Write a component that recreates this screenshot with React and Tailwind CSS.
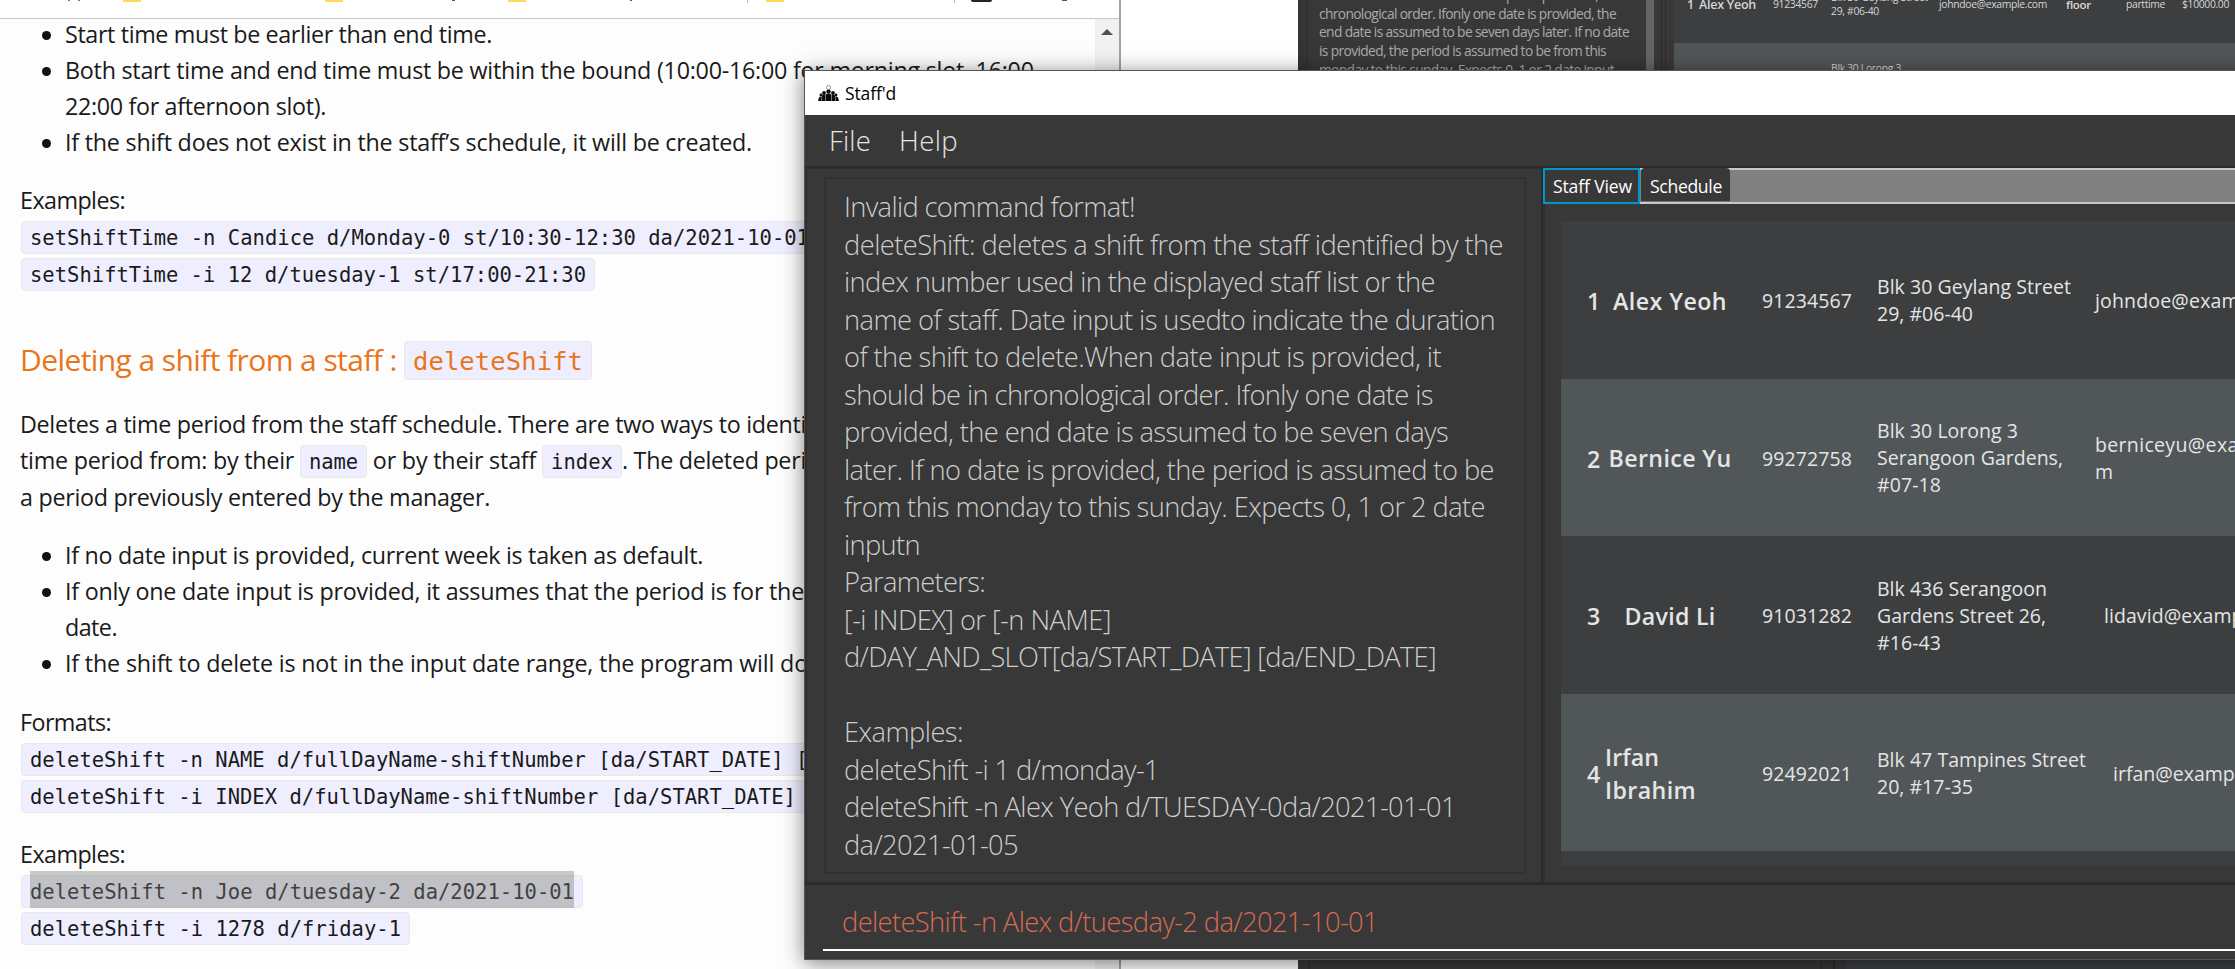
import { useLayoutEffect, useRef } from "react";

/* One line of text whose tracking is adjusted so that it spans `w` pixels. */
function Fit({ w, className = "", children }) {
  const ref = useRef(null);
  useLayoutEffect(() => {
    const el = ref.current;
    el.style.letterSpacing = "0px";
    const natural = el.getBoundingClientRect().width;
    el.style.letterSpacing = (w - natural) / el.textContent.length + "px";
  }, [w, children]);
  return (
    <span ref={ref} className={"inline-block whitespace-pre " + className}>
      {children}
    </span>
  );
}

function Bullet({ lines }) {
  return (
    <li className="flex">
      <span className="mt-[15px] ml-[42px] h-[9px] w-[9px] shrink-0 rounded-full bg-[#111]" />
      <div className="ml-[14px] flex flex-col items-start">
        {lines.map(([text, w]) => (
          <Fit key={text} w={w}>{text}</Fit>
        ))}
      </div>
    </li>
  );
}

const codeBox =
  "box-border inline-flex h-[33px] items-center rounded-[4px] border border-[#e8e8e8] bg-[#eeeeff] px-2 pt-[2px] font-['DejaVu_Sans_Mono',monospace] text-[20.5px] leading-[31px] whitespace-pre";

function Code({ w, selected, children }) {
  return (
    <div className={codeBox + " relative"}>
      <Fit w={w}>{children}</Fit>
      {selected && <span className="absolute -top-[5px] left-2 h-[37px] w-[544px] bg-[#7b7b72]/40" />}
    </div>
  );
}

function BrowserWindow() {
  return (
    <div className="absolute top-0 left-0 flex h-[969px] w-[1121px] flex-col overflow-hidden border-r-2 border-[#a3a3a3] bg-white">
      <div className="relative h-[19px] shrink-0 border-b border-[#c9c9c9] bg-white">
        <span className="absolute top-0 left-[68px] h-px w-[2px] bg-[#777]" />
        <span className="absolute top-0 left-[78px] h-px w-[2px] bg-[#777]" />
        <span className="absolute top-0 left-[123px] h-[2px] w-[18px] bg-[#ffd95b]" />
        <span className="absolute top-0 left-[325px] h-[2px] w-[18px] bg-[#ffd95b]" />
        <span className="absolute top-0 left-[452px] h-px w-[3px] bg-[#555]" />
        <span className="absolute top-0 left-[508px] h-[2px] w-[18px] bg-[#ffd95b]" />
        <span className="absolute top-0 left-[630px] h-px w-[2px] bg-[#555]" />
        <span className="absolute top-0 left-[747px] h-[3px] w-px bg-[#bbb]" />
        <span className="absolute top-0 left-[766px] h-[2px] w-[18px] bg-[#ffd95b]" />
        <span className="absolute top-0 left-[954px] h-[3px] w-px bg-[#bbb]" />
        <span className="absolute top-0 left-[971px] h-[2px] w-[21px] rounded-b bg-[#24222a]" />
        <span className="absolute top-0 left-[1062px] h-px w-[5px] bg-[#555]" />
      </div>
      <div className="flex min-h-0 flex-1">
        <div className="flex w-[1095px] flex-col overflow-hidden bg-[#fdfdfd] font-['Open_Sans',sans-serif] text-[23.3px] leading-[36px] text-[#1a1a1a]">
          <ul className="-mt-[3px] flex flex-col">
            <Bullet lines={[["Start time must be earlier than end time.", 427]]} />
            <Bullet
              lines={[
                ["Both start time and end time must be within the bound (10:00-16:00 for morning slot, 16:00-", 976],
                ["22:00 for afternoon slot).", 261],
              ]}
            />
            <Bullet lines={[["If the shift does not exist in the staff’s schedule, it will be created.", 687]]} />
          </ul>
          <div className="mt-[22px] flex flex-col items-start pl-[20px]">
            <Fit w={105}>Examples:</Fit>
            <div className="mt-[3px] flex flex-col items-start gap-1 pl-px">
              <Code w={779}>setShiftTime -n Candice d/Monday-0 st/10:30-12:30 da/2021-10-01</Code>
              <Code w={556}>setShiftTime -i 12 d/tuesday-1 st/17:00-21:30</Code>
            </div>
            <h3 className="mt-[50px] flex text-[30px] leading-[37px] text-[#e9751a]">
              <Fit w={384}>Deleting a shift from a staff : </Fit>
              <span className="inline-flex h-[39px] items-center rounded-[4px] border border-[#e8e8e8] bg-[#eeeeff] px-2 pt-[2px] font-['DejaVu_Sans_Mono',monospace] text-[25.5px] leading-[37px]">
                <Fit w={170}>deleteShift</Fit>
              </span>
            </h3>
            <div className="mt-[26px] flex flex-col items-start">
              <Fit w={786}>Deletes a time period from the staff schedule. There are two ways to identi</Fit>
              <div className="flex h-[37px]">
                <Fit w={280}>time period from: by their </Fit>
                <span className={codeBox + " mt-[3px]"}><Fit w={49}>name</Fit></span>
                <Fit w={175}> or by their staff </Fit>
                <span className={codeBox + " mt-[3px]"}><Fit w={62}>index</Fit></span>
                <Fit w={184}>. The deleted peri</Fit>
              </div>
              <Fit w={470}>a period previously entered by the manager.</Fit>
            </div>
          </div>
          <ul className="mt-[22px] flex flex-col">
            <Bullet lines={[["If no date input is provided, current week is taken as default.", 638]]} />
            <Bullet
              lines={[
                ["If only one date input is provided, it assumes that the period is for the", 739],
                ["date.", 52],
              ]}
            />
            <Bullet lines={[["If the shift to delete is not in the input date range, the program will do", 743]]} />
          </ul>
          <div className="mt-[23px] flex flex-col items-start pl-[20px]">
            <Fit w={91}>Formats:</Fit>
            <div className="mt-[3px] flex flex-col items-start gap-1 pl-px">
              <Code w={803}>deleteShift -n NAME d/fullDayName-shiftNumber [da/START_DATE] [da</Code>
              <Code w={803}>deleteShift -i INDEX d/fullDayName-shiftNumber [da/START_DATE] [d</Code>
            </div>
            <Fit w={105} className="mt-[23px]">Examples:</Fit>
            <div className="mt-[3px] flex flex-col items-start gap-1 pl-px">
              <Code w={544} selected>deleteShift -n Joe d/tuesday-2 da/2021-10-01</Code>
              <Code w={371}>deleteShift -i 1278 d/friday-1</Code>
            </div>
          </div>
        </div>
        <div className="flex flex-1 justify-center bg-[#f1f1f1] pt-[10px]">
          <svg width="12" height="6" viewBox="0 0 12 6" fill="#505050"><path d="M6 0L12 6H0z" /></svg>
        </div>
      </div>
    </div>
  );
}

function BackdropApp() {
  return (
    <div className="absolute top-0 left-[1298px] flex h-[969px] w-[937px] flex-col overflow-hidden bg-[#383838] font-['Open_Sans',sans-serif]">
      <div className="flex h-[900px] shrink-0">
        <div className="w-[10px] border-r border-[#2f2f2f] bg-[#343434]" />
        <div className="-mt-[14px] flex w-[338px] flex-col items-start pl-[11px] text-[13.8px] leading-[18.7px] text-[#a9abab]">
          <Fit w={290}>the shift to delete.When date input is provided, it</Fit>
          <Fit w={297}>chronological order. Ifonly one date is provided, the</Fit>
          <Fit w={310}>end date is assumed to be seven days later. If no date</Fit>
          <Fit w={287}>is provided, the period is assumed to be from this</Fit>
          <Fit w={295}>monday to this sunday. Expects 0, 1 or 2 date input</Fit>
        </div>
        <div className="w-2 bg-[#656565]" />
        <div className="ml-[7px] w-[5px] border-x border-[#2b2b2b]" />
        <div className="ml-2 flex flex-1 flex-col text-[10.4px] leading-[13.5px] text-[#d5d6d6]">
          <div className="flex h-[43px] bg-[#3c3e3f]">
            <div className="flex w-full items-start pl-[13px] font-normal">
              <Fit w={7} className="-mt-[2px] text-[12.5px] font-semibold">1</Fit>
              <Fit w={57} className="-mt-[2px] ml-[5px] text-[12.5px] font-semibold">Alex Yeoh</Fit>
              <Fit w={45} className="-mt-[2px] ml-[17px]">91234567</Fit>
              <div className="-mt-[9px] ml-[13px] flex w-[108px] flex-col items-start">
                <Fit w={97}>Blk 30 Geylang Street</Fit>
                <Fit w={48}>29, #06-40</Fit>
              </div>
              <Fit w={108} className="-mt-[2px]">johndoe@example.com</Fit>
              <Fit w={25} className="-mt-[2px] ml-[19px] text-[11.5px] font-semibold">floor</Fit>
              <Fit w={39} className="-mt-[2px] ml-[35px]">parttime</Fit>
              <Fit w={47} className="-mt-[2px] ml-[17px]">$10000.00</Fit>
            </div>
          </div>
          <div className="flex-1 bg-[#515658] pt-[19px] pl-[157px]">
            <Fit w={70}>Blk 30 Lorong 3</Fit>
          </div>
        </div>
      </div>
      <div className="flex flex-1">
        <div className="w-[12px] border-r border-[#2b2b2b]" />
        <div className="w-[512px] border-r border-[#2b2b2b]" />
        <div className="w-[13px] border-r-2 border-[#2b2b2b]" />
        <div className="ml-[12px] flex-1 bg-[#3c3e42]" />
      </div>
    </div>
  );
}

function TeamIcon() {
  return (
    <svg width="21" height="17" viewBox="0 0 21 17" fill="#0a0a0a">
      <circle cx="10.5" cy="2.6" r="2.1" fill="#fff" stroke="#888" strokeWidth="0.9" />
      <circle cx="10.5" cy="6.6" r="2.2" />
      <circle cx="6" cy="8" r="1.9" />
      <circle cx="15" cy="8" r="1.9" />
      <circle cx="3" cy="10" r="1.4" />
      <circle cx="18" cy="10" r="1.4" />
      <path d="M7.5 16V11Q7.5 8.6 10.5 8.6T13.5 11V16z" />
      <path d="M3.7 16V12Q3.7 9.8 5.6 9.8H7.1V16zM17.3 16V12Q17.3 9.8 15.4 9.8H13.9V16z" />
      <path d="M0 16L1 12.4Q1.6 11.4 3.4 11.4V16zM21 16L20 12.4Q19.4 11.4 17.6 11.4V16z" />
    </svg>
  );
}

const message = [
  ["Invalid command format!", 291],
  ["deleteShift: deletes a shift from the staff identified by the", 659],
  ["index number used in the displayed staff list or the", 591],
  ["name of staff. Date input is usedto indicate the duration", 651],
  ["of the shift to delete.When date input is provided, it", 597],
  ["should be in chronological order. Ifonly one date is", 589],
  ["provided, the end date is assumed to be seven days", 604],
  ["later. If no date is provided, the period is assumed to be", 650],
  ["from this monday to this sunday. Expects 0, 1 or 2 date", 641],
  ["inputn", 76],
  ["Parameters:", 141],
  ["[-i INDEX] or [-n NAME]", 267],
  ["d/DAY_AND_SLOT[da/START_DATE] [da/END_DATE]", 592],
  null,
  ["Examples:", 119],
  ["deleteShift -i 1 d/monday-1", 315],
  ["deleteShift -n Alex Yeoh d/TUESDAY-0da/2021-01-01", 612],
  ["da/2021-01-05", 174],
];

const staff = [
  {
    id: "1", shade: "bg-[#3c3e3f]", names: [["Alex Yeoh", 114]], phone: "91234567",
    address: [["Blk 30 Geylang Street", 194], ["29, #06-40", 96]],
    email: [["johndoe@example.com", 218]], indent: "pl-0",
  },
  {
    id: "2", shade: "bg-[#515658]", names: [["Bernice Yu", 123]], phone: "99272758",
    address: [["Blk 30 Lorong 3", 141], ["Serangoon Gardens,", 186], ["#07-18", 64]],
    email: [["berniceyu@example.co", 218], ["m", 19]], indent: "pl-0",
  },
  {
    id: "3", shade: "bg-[#3c3e3f]", names: [["David Li", 91]], phone: "91031282",
    address: [["Blk 436 Serangoon", 170], ["Gardens Street 26,", 169], ["#16-43", 64]],
    email: [["lidavid@example.com", 200]], indent: "pl-[9px]",
  },
  {
    id: "4", shade: "bg-[#515658]", names: [["Irfan", 54], ["Ibrahim", 91]], phone: "92492021",
    address: [["Blk 47 Tampines Street", 209], ["20, #17-35", 96]],
    email: [["irfan@example.com", 182]], indent: "pl-[18px]",
  },
];

function StaffRow({ person }) {
  const stacked = person.names.length > 1;
  return (
    <div className={"flex h-[157.6px] shrink-0 items-center pt-px " + person.shade}>
      <span className="ml-[26px] w-[13px] pt-[3px] text-center text-[23.2px] leading-[33px] font-semibold">{person.id}</span>
      <div className={"ml-[5px] flex w-[130px] shrink-0 flex-col text-[23.2px] leading-[33px] font-semibold " + (stacked ? "items-start pt-px" : "items-center pt-[2px]")}>
        {person.names.map(([t, w]) => <Fit key={t} w={w}>{t}</Fit>)}
      </div>
      <Fit w={90} className="ml-[27px] pt-px">{person.phone}</Fit>
      <div className="ml-[25px] flex w-[218px] shrink-0 flex-col items-start">
        {person.address.map(([t, w]) => <Fit key={t} w={w}>{t}</Fit>)}
      </div>
      <div className={"flex w-[230px] shrink-0 flex-col items-start " + person.indent}>
        {person.email.map(([t, w]) => <Fit key={t} w={w}>{t}</Fit>)}
      </div>
    </div>
  );
}

function StaffdWindow() {
  return (
    <div className="absolute top-[70px] left-[804px] flex h-[890px] w-[1450px] flex-col border border-[#555] bg-[#383838] font-['Open_Sans',sans-serif] shadow-[0_3px_20px_rgba(0,0,0,0.5)]">
      <header className="flex h-[44px] shrink-0 items-center bg-white pl-[13px] text-[17.5px] leading-[24px] text-black">
        <TeamIcon />
        <Fit w={51} className="ml-[6px]">Staff'd</Fit>
      </header>
      <nav className="flex h-[53px] shrink-0 border-b-2 border-[#2c2c2c] pt-[7px] pl-[24px] text-[27.5px] leading-[37px] font-light text-[#e6e6e6]">
        <Fit w={42}>File</Fit>
        <Fit w={59} className="ml-[28px]">Help</Fit>
      </nav>
      <main className="flex h-[714px] shrink-0">
        <section className="w-[736px] shrink-0 border-t border-l-2 border-[#2f2f2f] pt-[8px] pl-[17px]">
          <div className="h-[697px] w-[702px] border-2 border-[#303030] pt-[9px] pl-[18px] text-[27.3px] leading-[37.5px] font-light text-[#cccdcd]">
            {message.map((line, i) =>
              line ? (
                <div key={i} className="h-[37.5px]"><Fit w={line[1]}>{line[0]}</Fit></div>
              ) : (
                <div key={i} className="h-[37.5px]" />
              )
            )}
          </div>
        </section>
        <section className="flex flex-1 flex-col border-l-2 border-[#2b2b2b]">
          <div className="flex h-[36px] shrink-0 border-y-2 border-[#c8c8c8] bg-[#808080] text-[17.6px] leading-[24px] text-white">
            <div className="-my-[2px] box-border h-[36px] w-[97px] border-2 border-[#0096c9] bg-[#383838] pt-[4px] pl-[8px]">
              <Fit w={79}>Staff View</Fit>
            </div>
            <div className="-mt-[2px] ml-px h-[34px] w-[89px] rounded-t-[4px] border-b border-[#777] bg-[#383838] pt-[6px] pl-[9px]">
              <Fit w={72}>Schedule</Fit>
            </div>
          </div>
          <div className="flex-1 border-l-2 border-[#2f2f2f] pt-[17px] pl-[16px]">
            <div className="flex h-[645px] flex-col overflow-hidden bg-[#3c3e3f] text-[19.5px] leading-[27px] text-[#e4e5e5]">
              {staff.map((p) => <StaffRow key={p.id} person={p} />)}
            </div>
          </div>
        </section>
      </main>
      <footer className="flex flex-1 flex-col border-t-[3px] border-[#2b2b2b] pl-[18px]">
        <div className="h-[66px] border-b-2 border-white pt-[18px] pl-[19px] text-[27.3px] leading-[37px] font-light text-[#d96a54]">
          <Fit w={536}>deleteShift -n Alex d/tuesday-2 da/2021-10-01</Fit>
        </div>
      </footer>
    </div>
  );
}

export default function App() {
  return (
    <div className="relative h-[969px] w-full overflow-hidden bg-white">
      <BackdropApp />
      <BrowserWindow />
      <StaffdWindow />
    </div>
  );
}
